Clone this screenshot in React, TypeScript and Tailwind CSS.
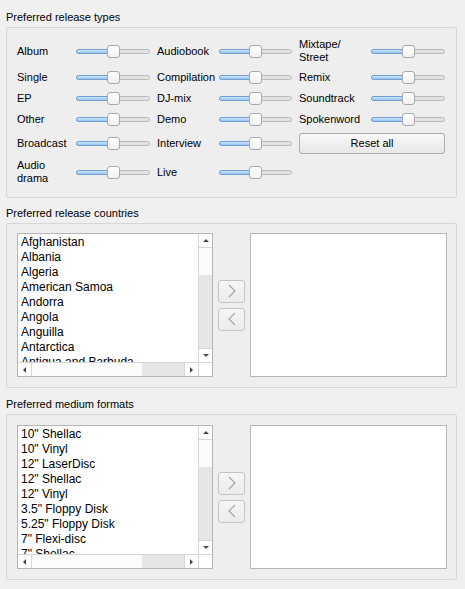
import React from 'react';

const COUNTRIES = [
  'Afghanistan',
  'Albania',
  'Algeria',
  'American Samoa',
  'Andorra',
  'Angola',
  'Anguilla',
  'Antarctica',
  'Antigua and Barbuda',
];

const FORMATS = [
  '10" Shellac',
  '10" Vinyl',
  '12" LaserDisc',
  '12" Shellac',
  '12" Vinyl',
  '3.5" Floppy Disk',
  '5.25" Floppy Disk',
  '7" Flexi-disc',
  '7" Shellac',
];

function Slider({ width, pos }: { width: string; pos: string }) {
  return (
    <div className={`relative h-[13px] ${width}`}>
      <div className="absolute left-0 right-0 top-[4px] h-[5px] rounded-full border border-[#b9b9b9] bg-[#e2e2e2]" />
      <div
        className={`absolute left-0 top-[4px] h-[5px] rounded-l-full border border-[#6f9fd6] bg-gradient-to-b from-[#cfe5fb] to-[#94c3f1] ${pos}`}
      />
      <div
        className="absolute top-0 h-[13px] w-[13px] rounded-[3px] border border-[#a9a9a9] bg-gradient-to-b from-white to-[#f1f1f1]"
        style={{ left: pos === 'w-[32px]' ? 30 : 31 }}
      />
    </div>
  );
}

function Cell({
  label,
  labelW,
  sliderW,
  pos = 'w-[33px]',
}: {
  label: React.ReactNode;
  labelW: string;
  sliderW: string;
  pos?: string;
}) {
  return (
    <div className="flex items-center">
      <div className={`${labelW} leading-[13px]`}>{label}</div>
      <Slider width={sliderW} pos={pos} />
    </div>
  );
}

function Arrow({ dir }: { dir: 'up' | 'down' | 'left' | 'right' }) {
  const pts = {
    up: '1,5 4,2 7,5',
    down: '1,2 4,5 7,2',
    left: '5,1 2,4 5,7',
    right: '2,1 5,4 2,7',
  }[dir];
  return (
    <svg width="8" height="8" viewBox="0 0 8 8">
      <polygon points={pts} fill="#4a4a4a" />
    </svg>
  );
}

function ListBox({ items }: { items: string[] }) {
  return (
    <div className="flex h-[144px] w-[196px] flex-col border border-[#b5b5b5] bg-white">
      <div className="flex min-h-0 flex-1">
        <div className="flex-1 overflow-hidden pl-[3px] pt-[1px] text-[12px] leading-[15px]">
          {items.map((it) => (
            <div key={it} className="h-[15px] whitespace-nowrap">
              {it}
            </div>
          ))}
        </div>
        <div className="flex w-[14px] flex-col border-l border-[#d6d6d6]">
          <div className="flex h-[14px] items-center justify-center border-b border-[#d6d6d6] bg-white">
            <Arrow dir="up" />
          </div>
          <div className="h-[27px] bg-[#fbfbfb]" />
          <div className="flex-1 bg-[#e6e6e6]" />
          <div className="flex h-[14px] items-center justify-center border-t border-[#d6d6d6] bg-white">
            <Arrow dir="down" />
          </div>
        </div>
      </div>
      <div className="flex h-[14px] border-t border-[#d6d6d6]">
        <div className="flex w-[14px] items-center justify-center border-r border-[#d6d6d6]">
          <Arrow dir="left" />
        </div>
        <div className="w-[110px] bg-[#fbfbfb]" />
        <div className="flex-1 bg-[#e6e6e6]" />
        <div className="flex w-[14px] items-center justify-center border-l border-[#d6d6d6]">
          <Arrow dir="right" />
        </div>
        <div className="w-[14px] border-l border-[#d6d6d6] bg-white" />
      </div>
    </div>
  );
}

function MoveButton({ children }: { children: React.ReactNode }) {
  return (
    <div className="flex h-[23px] w-[27px] items-center justify-center rounded-[3px] border border-[#c4c4c4] bg-gradient-to-b from-[#f6f6f6] to-[#ececec]">
      {children}
    </div>
  );
}

function Chevron({ left }: { left?: boolean }) {
  return (
    <svg width="10" height="14" viewBox="0 0 10 14">
      <polyline
        points={left ? '8,1 2,7 8,13' : '2,1 8,7 2,13'}
        fill="none"
        stroke="#a5a5a5"
        strokeWidth="1.2"
      />
    </svg>
  );
}

function ListGroup({ title, items, pt }: { title: string; items: string[]; pt: string }) {
  return (
    <div>
      <div className="h-[14px] leading-[14px]">{title}</div>
      <div className={`mt-[3px] rounded-[2px] border border-[#d6d6d6] bg-[#eeeeee] pb-[10px] pl-[10px] ${pt}`}>
        <div className="flex items-center gap-[5px]">
          <ListBox items={items} />
          <div className="flex flex-col gap-[5px]">
            <MoveButton>
              <Chevron />
            </MoveButton>
            <MoveButton>
              <Chevron left />
            </MoveButton>
          </div>
          <div className="h-[144px] w-[197px] border border-[#b5b5b5] bg-white" />
        </div>
      </div>
    </div>
  );
}

export default function App() {
  const c1 = { labelW: 'w-[59px]', sliderW: 'w-[74px]' };
  const c2 = { labelW: 'w-[62px]', sliderW: 'w-[73px]', pos: 'w-[32px]' };
  const c3 = { labelW: 'w-[72px]', sliderW: 'w-[74px]' };
  return (
    <div
      className="h-[589px] w-[465px] bg-[#f0f0f0] pl-[6px] pr-[8px] pt-[10px] text-[11px] text-black"
      style={{ fontFamily: '"Liberation Sans", Arial, sans-serif' }}
    >
      <div className="h-[14px] leading-[14px]">Preferred release types</div>
      <div className="mt-[3px] w-[451px] rounded-[2px] border border-[#d6d6d6] bg-[#eeeeee] pb-[11px] pl-[10px] pt-[9px]">
        <div className="grid grid-cols-[133px_135px_147px] grid-rows-[28px_17px_17px_17px_22px_28px] gap-x-[7px] gap-y-[4px]">
          <Cell label="Album" {...c1} />
          <Cell label="Audiobook" {...c2} />
          <Cell label={<>Mixtape/<br />Street</>} {...c3} />

          <Cell label="Single" {...c1} />
          <Cell label="Compilation" {...c2} />
          <Cell label="Remix" {...c3} />

          <Cell label="EP" {...c1} />
          <Cell label="DJ-mix" {...c2} />
          <Cell label="Soundtrack" {...c3} />

          <Cell label="Other" {...c1} />
          <Cell label="Demo" {...c2} />
          <Cell label="Spokenword" {...c3} />

          <Cell label="Broadcast" {...c1} />
          <Cell label="Interview" {...c2} />
          <div className="flex items-center">
            <div className="flex h-[21px] w-[146px] items-center justify-center rounded-[3px] border border-[#adadad] bg-gradient-to-b from-[#f8f8f8] to-[#e8e8e8]">
              Reset all
            </div>
          </div>

          <Cell label={<>Audio<br />drama</>} {...c1} />
          <Cell label="Live" {...c2} />
          <div />
        </div>
      </div>

      <div className="mt-[8px]">
        <ListGroup title="Preferred release countries" items={COUNTRIES} pt="pt-[9px]" />
      </div>
      <div className="mt-[9px]">
        <ListGroup title="Preferred medium formats" items={FORMATS} pt="pt-[10px]" />
      </div>
    </div>
  );
}
